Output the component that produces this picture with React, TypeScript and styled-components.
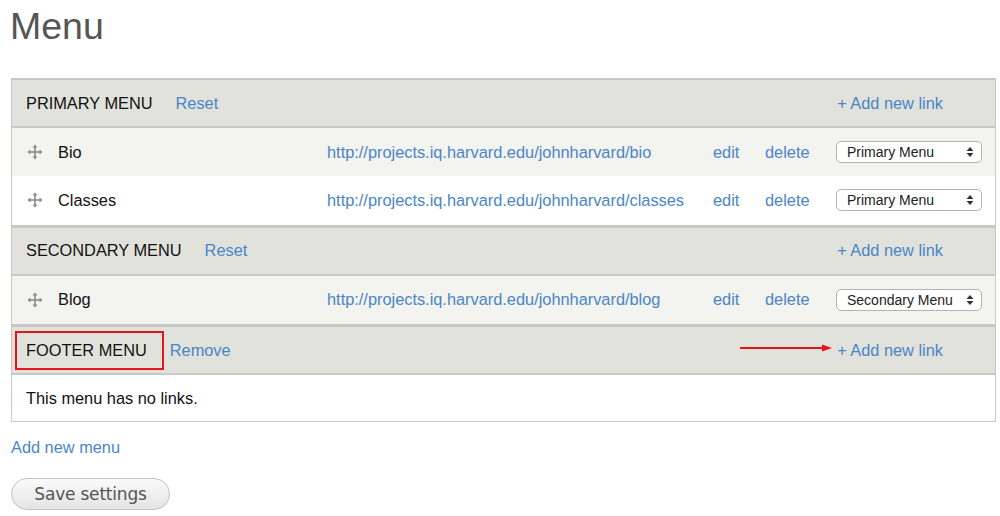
import React from 'react';
import styled, { createGlobalStyle } from 'styled-components';

const GlobalStyle = createGlobalStyle`
  body {
    margin: 0;
    background: #ffffff;
    font-family: 'Liberation Sans', Arial, sans-serif;
    color: #111;
  }
`;

const LINK = '#4a86c7';
const RULE = '#c8c8c5';
const TEXT_SIZE = '16.35px';

interface MenuLink {
  title: string;
  url: string;
  menu: string;
}

interface MenuGroup {
  name: string;
  action: string;
  links: MenuLink[];
  highlighted?: boolean;
}

const groups: MenuGroup[] = [
  {
    name: 'PRIMARY MENU',
    action: 'Reset',
    links: [
      { title: 'Bio', url: 'http://projects.iq.harvard.edu/johnharvard/bio', menu: 'Primary Menu' },
      { title: 'Classes', url: 'http://projects.iq.harvard.edu/johnharvard/classes', menu: 'Primary Menu' },
    ],
  },
  {
    name: 'SECONDARY MENU',
    action: 'Reset',
    links: [
      { title: 'Blog', url: 'http://projects.iq.harvard.edu/johnharvard/blog', menu: 'Secondary Menu' },
    ],
  },
  { name: 'FOOTER MENU', action: 'Remove', links: [], highlighted: true },
];

const Page = styled.div`
  padding: 0 4px 0 11px;
  width: 985px;
`;

const Title = styled.h1`
  margin: 0 0 0 -1px;
  padding: 4px 0 0 0;
  height: 74px;
  font-size: 37.5px;
  font-weight: normal;
  color: #555;
  line-height: 44px;
`;

const Table = styled.div`
  border: 1px solid ${RULE};
  border-top-width: 2px;
`;

const HeaderRow = styled.div`
  position: relative;
  display: flex;
  align-items: center;
  height: 46px;
  padding: 0 0 0 14px;
  background: #e1e2dc;
  border-bottom: 2px solid ${RULE};
  font-size: ${TEXT_SIZE};
`;

const GroupName = styled.span<{ $highlighted?: boolean }>`
  display: flex;
  align-items: center;
  margin-right: ${(p) => (p.$highlighted ? '6px' : '23px')};
  ${(p) =>
    p.$highlighted &&
    `
    margin-left: -11px;
    height: 35px;
    padding: 0 15px 0 9px;
    border: 2px solid #e8141a;
  `}
`;

const Link = styled.a`
  color: ${LINK};
  text-decoration: none;
  font-size: ${TEXT_SIZE};
`;

const AddLink = styled(Link)`
  margin-left: auto;
  margin-right: 52px;
`;

const Arrow = styled.svg`
  position: absolute;
  left: 728px;
  top: 16px;
`;

const LinkRow = styled.div<{ $alt: boolean; $last: boolean }>`
  display: grid;
  grid-template-columns: 46px 269px 386px 52px 71px 146px;
  align-items: center;
  height: ${(p) => (p.$last ? '48.5px' : '48px')};
  background: ${(p) => (p.$alt ? '#ffffff' : '#f3f3ef')};
  border-bottom: ${(p) => (p.$last ? `3px solid ${RULE}` : 'none')};
  font-size: ${TEXT_SIZE};
`;

const Handle = styled.span`
  display: flex;
  justify-content: center;
`;

const Select = styled.div`
  display: flex;
  align-items: center;
  justify-content: space-between;
  height: 20px;
  padding: 0 7px 0 10px;
  background: #fff;
  border: 1px solid #b3b3b3;
  border-radius: 5px;
  font-size: 14px;
  color: #222;
`;

const EmptyRow = styled.div`
  display: flex;
  align-items: center;
  height: 46px;
  padding-left: 14px;
  background: #fff;
  font-size: ${TEXT_SIZE};
`;

const Footer = styled.div`
  display: flex;
  flex-direction: column;
  align-items: flex-start;
  padding-top: 16px;
  gap: 21px;
`;

const SaveButton = styled.button`
  width: 159px;
  height: 32px;
  border: 1px solid #c2c2c2;
  border-radius: 16px;
  background: linear-gradient(#fbfbfb, #e4e4e4);
  color: #555;
  font-family: 'DejaVu Sans', Verdana, sans-serif;
  font-size: 17px;
  letter-spacing: -0.2px;
  padding: 0;
`;

const MoveIcon = () => (
  <svg width="16" height="16" viewBox="0 0 16 16" fill="#8a8a8a">
    <rect x="7.2" y="2.5" width="1.6" height="11" />
    <rect x="2.5" y="7.2" width="11" height="1.6" />
    <polygon points="8,0.5 10.5,3.5 5.5,3.5" />
    <polygon points="8,15.5 10.5,12.5 5.5,12.5" />
    <polygon points="0.5,8 3.5,5.5 3.5,10.5" />
    <polygon points="15.5,8 12.5,5.5 12.5,10.5" />
  </svg>
);

const SelectArrows = () => (
  <svg width="8" height="12" viewBox="0 0 8 12" fill="#333">
    <polygon points="4,1 7.5,5 0.5,5" />
    <polygon points="4,11 7.5,7 0.5,7" />
  </svg>
);

export default function App() {
  return (
    <>
      <GlobalStyle />
      <Page>
        <Title>Menu</Title>
        <Table>
          {groups.map((group) => (
            <React.Fragment key={group.name}>
              <HeaderRow>
                <GroupName $highlighted={group.highlighted}>{group.name}</GroupName>
                <Link href="#">{group.action}</Link>
                {group.highlighted && (
                  <Arrow width="92" height="10" viewBox="0 0 92 10">
                    <line x1="0" y1="5" x2="84" y2="5" stroke="#e8141a" strokeWidth="2" />
                    <polygon points="92,5 82,1.5 82,8.5" fill="#e8141a" />
                  </Arrow>
                )}
                <AddLink href="#">+ Add new link</AddLink>
              </HeaderRow>
              {group.links.map((link, i) => (
                <LinkRow key={link.title} $alt={i % 2 === 1} $last={i === group.links.length - 1}>
                  <Handle>
                    <MoveIcon />
                  </Handle>
                  <span>{link.title}</span>
                  <Link href="#">{link.url}</Link>
                  <Link href="#">edit</Link>
                  <Link href="#">delete</Link>
                  <Select>
                    <span>{link.menu}</span>
                    <SelectArrows />
                  </Select>
                </LinkRow>
              ))}
              {group.links.length === 0 && <EmptyRow>This menu has no links.</EmptyRow>}
            </React.Fragment>
          ))}
        </Table>
        <Footer>
          <Link href="#">Add new menu</Link>
          <SaveButton>Save settings</SaveButton>
        </Footer>
      </Page>
    </>
  );
}
